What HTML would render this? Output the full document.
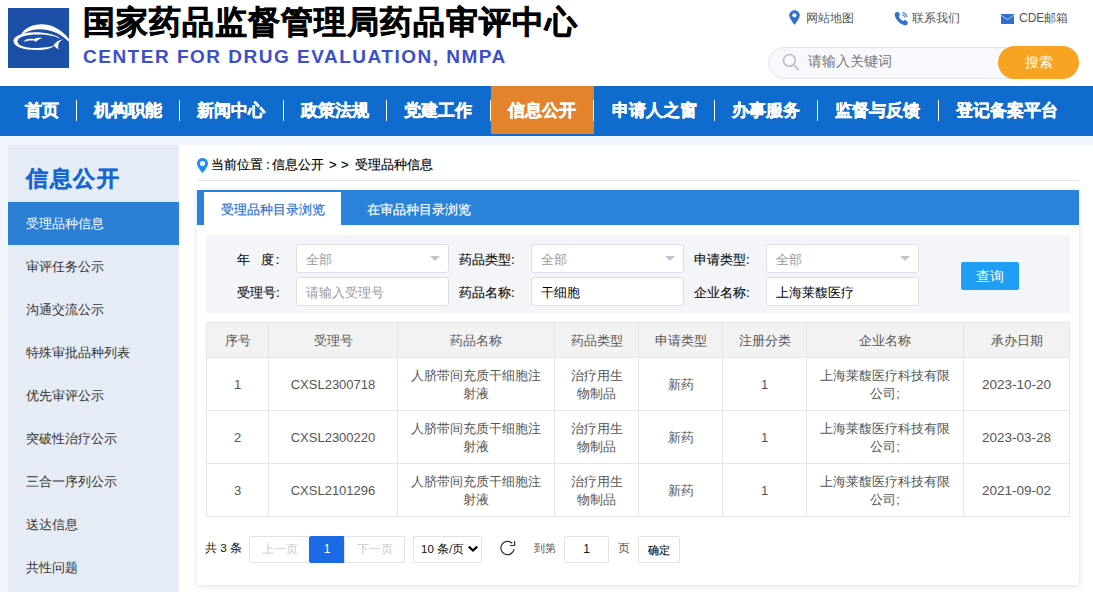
<!DOCTYPE html>
<html><head><meta charset="utf-8">
<style>
*{margin:0;padding:0;box-sizing:border-box}
html,body{width:1093px;height:592px;overflow:hidden;background:#fff;font-family:"Liberation Sans",sans-serif;color:#333}
.abs{position:absolute}
#hdr{position:absolute;left:0;top:0;width:1093px;height:86px;background:#fff}
#logo{position:absolute;left:8px;top:8px;width:61px;height:60px;background:#1a4ea6}
#title{position:absolute;left:83px;top:2px;font-size:32px;letter-spacing:1px;font-weight:bold;color:#000;-webkit-text-stroke:0.6px #000;line-height:40px;white-space:nowrap}
#eng{position:absolute;left:83px;top:46px;font-size:19px;font-weight:bold;color:#3d4fcb;letter-spacing:1.5px;line-height:22px;white-space:nowrap}
.tl{position:absolute;top:9px;font-size:12px;color:#555;line-height:18px;white-space:nowrap}
#search{position:absolute;left:768px;top:47px;width:300px;height:32px;border:1px solid #e3e5e8;border-radius:16px;background:#f8f9fc}
#sph{position:absolute;left:808px;top:53px;font-size:13.6px;color:#777;line-height:18px}
#sbtn{position:absolute;left:998px;top:46px;width:81px;height:33px;border-radius:17px;background:#f9a322;color:#fff;font-size:14px;line-height:33px;text-align:center}
#nav{position:absolute;left:0;top:86px;width:1093px;height:50px;background:#0f6bcd}
.ni{position:absolute;top:0;height:50px;line-height:50px;color:#fff;font-size:17px;font-weight:bold;-webkit-text-stroke:0.4px #fff;white-space:nowrap}
.ns{position:absolute;top:14px;width:1px;height:21px;background:#fff}
#pagebg{position:absolute;left:0;top:136px;width:1093px;height:456px;background:#f1f6fc}
#side{position:absolute;left:8px;top:145px;width:171px;height:447px;background:#e6ecf5}
#stitle{position:absolute;left:18px;top:19px;font-size:22px;letter-spacing:1.5px;font-weight:bold;color:#1766d6;-webkit-text-stroke:0.4px #1766d6;line-height:30px}
.si{position:absolute;left:0;width:171px;height:43px;line-height:43px;padding-left:18px;font-size:13px;color:#333}
.si.on{background:#2b80d5;color:#fff}
#main{position:absolute;left:179px;top:145px;width:914px;height:447px;background:#fff}

#bc{position:absolute;left:211px;top:156px;font-size:13px;color:#000;line-height:18px;white-space:nowrap;-webkit-text-stroke:0.15px #000}
#bcl{position:absolute;left:197px;top:180px;width:882px;height:1px;background:#e2e2e2}
#card{position:absolute;left:197px;top:190px;width:882px;height:395px;background:#fff;box-shadow:0 1px 5px rgba(0,50,120,0.16)}
#tabs{position:absolute;left:0;top:0;width:882px;height:35px;background:#2a83d8}
#tab1{position:absolute;left:7px;top:2px;width:137px;height:33px;background:#fff;color:#2a6fcf;-webkit-text-stroke:0.2px #2a6fcf;font-size:13px;line-height:35px;text-align:center}
#tab2{position:absolute;left:144px;top:2px;width:155px;height:33px;color:#fff;-webkit-text-stroke:0.2px #fff;font-size:13px;line-height:35px;text-align:center}
#flt{position:absolute;left:9px;top:45px;width:864px;height:78px;background:#f4f5f9}
.fl{position:absolute;font-size:13px;color:#111;-webkit-text-stroke:0.15px #111;line-height:22px;white-space:nowrap}
.fb{position:absolute;width:153px;height:29px;background:#fff;border:1px solid #dcdfe6;border-radius:3px;font-size:13px;line-height:29px;padding-left:9px;color:#999;white-space:nowrap}
.fb.v{color:#000}
.tri{position:absolute;right:8px;top:11px;width:0;height:0;border-left:5px solid transparent;border-right:5px solid transparent;border-top:5px solid #c0c4cc}
#qbtn{position:absolute;left:755px;top:27px;width:58px;height:28px;background:#1e9ff5;color:#fff;font-size:14px;line-height:28px;text-align:center;border-radius:2px}
#tbl{position:absolute;left:9px;top:132px;border-collapse:collapse;font-size:13px;color:#555}
#tbl td,#tbl th{border:1px solid #e6e6e6;text-align:center;font-weight:normal;line-height:18px;padding:0 4px}
#tbl th{background:#f2f2f2;height:35px;color:#555;padding-top:2px}
#tbl td{height:53px;padding-top:2px}
.pg{position:absolute;font-size:12px;white-space:nowrap}
.pb{position:absolute;top:346px;height:27px;border:1px solid #e2e2e2;border-radius:2px;background:#fff;font-size:12px;line-height:25px;text-align:center;color:#ccc}
</style></head><body>
<div id="hdr">
  <svg id="logo" width="61" height="60" viewBox="0 0 61 60" style="position:absolute;left:8px;top:8px;overflow:visible">
<rect width="61" height="60" fill="#1b4fa8"/>
<path d="M13.2 26.2 C20 14.5 45 10 61 31 L64 37 C50 21 30 17.5 16 25.5 Z" fill="#fff"/>
<path fill-rule="evenodd" fill="#fff" d="M5.5 33.5 C5 26 22 23.5 33 24.5 C43 25.5 51 28 52 31 C48 28 40 26.5 30 26.5 C18 26.5 9.5 29 9.5 33.5 C9.5 38 19 40.5 30 40 C38 39.7 44 38.5 46 37.5 C45 40 38 42 29 42 C15 42 6 38.5 5.5 33.5 Z"/>
<path fill="#fff" d="M45.5 37.8 C47 34.5 50 32.3 55 31.2 C51 33.5 49.5 36 50.5 41.5 C48.5 40 47 38.8 45.5 37.8 Z"/>
<path fill="#fff" d="M15.5 34 C17 31 21 30 26 31 C28 30 31 29.5 34 30 C31 31.5 29 32.5 27.5 34 C27 33 26.5 32.5 25 32.5 C21 32.3 18 33 15.5 34 Z"/>
</svg>
  <div id="title">国家药品监督管理局药品审评中心</div>
  <div id="eng">CENTER FOR DRUG EVALUATION, NMPA</div>
  <div class="tl" style="left:806px">网站地图</div>
  <div class="tl" style="left:912px">联系我们</div>
  <div class="tl" style="left:1019px">CDE邮箱</div>
  <div id="search"></div>

  <svg class="abs" style="left:789px;top:10px" width="11" height="15" viewBox="0 0 11 15"><path d="M5.5 0.2C2.6 0.2 0.3 2.5 0.3 5.3c0 3.4 5.2 9.6 5.2 9.6s5.2-6.2 5.2-9.6C10.7 2.5 8.4 0.2 5.5 0.2z" fill="#306fcf"/><circle cx="5.4" cy="5.3" r="2.1" fill="#fff"/></svg>
  <svg class="abs" style="left:894px;top:10.5px" width="15" height="15" viewBox="0 0 15 15"><path d="M2.2 1.2 L4.2 0.8 L6 3.6 L4.8 5.4 C5.6 7.4 7.2 9 9.2 10 L10.9 8.8 L13.8 10.8 L13.4 13 C13 14.2 11.8 14.6 10.4 14.2 C5.6 12.6 2.2 9 0.8 4.4 C0.4 3 0.9 1.7 2.2 1.2 Z" fill="#306fcf"/><path d="M8.4 1.4 C10.8 2 12.4 3.6 13 6" stroke="#5f8ad6" stroke-width="1.2" fill="none"/><path d="M8.2 3.6 C9.8 4 10.8 5 11.2 6.6" stroke="#5f8ad6" stroke-width="1.2" fill="none"/></svg>
  <svg class="abs" style="left:1001px;top:14px" width="13" height="10" viewBox="0 0 13 10"><rect width="13" height="10" fill="#306fcf"/><path d="M0 1.2 L6.5 5.6 L13 1.2" stroke="#9dbbea" stroke-width="1.1" fill="none"/></svg>
  <svg class="abs" style="left:781px;top:52px" width="20" height="20" viewBox="0 0 20 20"><circle cx="8.4" cy="8.4" r="5.9" stroke="#bdbdbd" stroke-width="1.6" fill="none"/><path d="M13.2 13.4 L17.6 17.8" stroke="#bdbdbd" stroke-width="1.8"/></svg>
  <div id="sph">请输入关键词</div>
  <div id="sbtn">搜索</div>
</div>
<div id="nav">
  <div class="ni" style="left:25px">首页</div>
  <div class="ns" style="left:76px"></div>
  <div class="ni" style="left:94px">机构职能</div>
  <div class="ns" style="left:179px"></div>
  <div class="ni" style="left:197px">新闻中心</div>
  <div class="ns" style="left:283px"></div>
  <div class="ni" style="left:301px">政策法规</div>
  <div class="ns" style="left:386px"></div>
  <div class="ni" style="left:404px">党建工作</div>
  <div class="ns" style="left:490px"></div>
  <div class="abs" style="left:491px;top:0;width:103px;height:48px;background:#e3832b"></div>
  <div class="ni" style="left:508px">信息公开</div>
  <div class="ns" style="left:593px"></div>
  <div class="ni" style="left:612px">申请人之窗</div>
  <div class="ns" style="left:714px"></div>
  <div class="ni" style="left:732px">办事服务</div>
  <div class="ns" style="left:817px"></div>
  <div class="ni" style="left:835px">监督与反馈</div>
  <div class="ns" style="left:938px"></div>
  <div class="ni" style="left:956px">登记备案平台</div>
</div>
<div id="pagebg"></div>
<div id="side">
  <div id="stitle">信息公开</div>
  <div class="si on" style="top:57px">受理品种信息</div>
  <div class="si" style="top:100px">审评任务公示</div>
  <div class="si" style="top:143px">沟通交流公示</div>
  <div class="si" style="top:186px">特殊审批品种列表</div>
  <div class="si" style="top:229px">优先审评公示</div>
  <div class="si" style="top:272px">突破性治疗公示</div>
  <div class="si" style="top:315px">三合一序列公示</div>
  <div class="si" style="top:358px">送达信息</div>
  <div class="si" style="top:401px">共性问题</div>
</div>
<div id="main"></div>
<svg class="abs" style="left:197px;top:158px" width="11" height="15" viewBox="0 0 11 15"><path d="M5.5 0C2.5 0 0 2.4 0 5.4c0 3.6 5.5 9.6 5.5 9.6S11 9 11 5.4C11 2.4 8.5 0 5.5 0z" fill="#1e8ffa"/><circle cx="5.5" cy="5.6" r="2.5" fill="#fff"/></svg>
<div id="bc"><span class="abs" style="left:0">当前位置</span><span class="abs" style="left:55px">:</span><span class="abs" style="left:61px">信息公开</span><span class="abs" style="left:118px">&gt;</span><span class="abs" style="left:130px">&gt;</span><span class="abs" style="left:144px">受理品种信息</span></div>
<div id="bcl"></div>
<div id="card">
  <div id="tabs"><div id="tab1">受理品种目录浏览</div><div id="tab2">在审品种目录浏览</div></div>
  <div id="flt">
    <div class="fl" style="left:31px;top:14px">年&nbsp;&nbsp;&nbsp;度<span style="margin-left:2px">:</span></div>
    <div class="fb" style="left:90px;top:9px">全部<span class="tri"></span></div>
    <div class="fl" style="left:253px;top:14px">药品类型:</div>
    <div class="fb" style="left:325px;top:9px">全部<span class="tri"></span></div>
    <div class="fl" style="left:488px;top:14px">申请类型:</div>
    <div class="fb" style="left:560px;top:9px">全部<span class="tri"></span></div>
    <div class="fl" style="left:31px;top:47px">受理号:</div>
    <div class="fb" style="left:90px;top:42px">请输入受理号</div>
    <div class="fl" style="left:253px;top:47px">药品名称:</div>
    <div class="fb v" style="left:325px;top:42px">干细胞</div>
    <div class="fl" style="left:488px;top:47px">企业名称:</div>
    <div class="fb v" style="left:560px;top:42px">上海莱馥医疗</div>
    <div id="qbtn">查询</div>
  </div>
  <table id="tbl">
    <tr><th style="width:62px">序号</th><th style="width:129px">受理号</th><th style="width:157px">药品名称</th><th style="width:84px">药品类型</th><th style="width:84px">申请类型</th><th style="width:84px">注册分类</th><th style="width:157px">企业名称</th><th style="width:106px">承办日期</th></tr>
    <tr><td>1</td><td>CXSL2300718</td><td>人脐带间充质干细胞注<br>射液</td><td>治疗用生<br>物制品</td><td>新药</td><td>1</td><td>上海莱馥医疗科技有限<br>公司;</td><td style="font-size:13.5px">2023-10-20</td></tr>
    <tr><td>2</td><td>CXSL2300220</td><td>人脐带间充质干细胞注<br>射液</td><td>治疗用生<br>物制品</td><td>新药</td><td>1</td><td>上海莱馥医疗科技有限<br>公司;</td><td style="font-size:13.5px">2023-03-28</td></tr>
    <tr><td>3</td><td>CXSL2101296</td><td>人脐带间充质干细胞注<br>射液</td><td>治疗用生<br>物制品</td><td>新药</td><td>1</td><td>上海莱馥医疗科技有限<br>公司;</td><td style="font-size:13.5px">2021-09-02</td></tr>
  </table>
  <div class="pg" style="left:8px;top:351px;color:#111;font-size:11.7px">共 3 条</div>
  <div class="pb" style="left:52px;width:61px;font-size:11.5px">上一页</div>
  <div class="pb" style="left:112px;width:36px;background:#1a6ae6;border-color:#1a6ae6;color:#fff;border-radius:2px">1</div>
  <div class="pb" style="left:147px;width:61px;font-size:11.5px">下一页</div>
  <div class="pb" style="left:216px;width:69px;color:#111;text-align:left;padding-left:7px;font-size:11.5px">10 条/页</div>
  <div class="pg" style="left:337px;top:351px;color:#555;font-size:11px">到第</div>
  <div class="pb" style="left:367px;width:45px;color:#111">1</div>
  <div class="pg" style="left:421px;top:351px;color:#555;font-size:11.5px">页</div>
  <div class="pb" style="left:441px;width:42px;color:#000;font-size:11px;line-height:27px;-webkit-text-stroke:0.1px #000">确定</div>
  <svg class="abs" style="left:270px;top:355px" width="12" height="8" viewBox="0 0 12 8"><path d="M1.8 1.6 L6 5.6 L10.2 1.6" stroke="#000" stroke-width="2.2" fill="none"/></svg>
  <svg class="abs" style="left:302px;top:349px" width="18" height="18" viewBox="0 0 18 18"><path d="M15.2 10.2 A6.7 6.7 0 1 1 13.3 4.2" stroke="#333" stroke-width="1.2" fill="none"/><path d="M11 6.5 L15.6 6.5 L15.6 2.1" stroke="#333" stroke-width="1.2" fill="none"/></svg>
</div>
</body></html>
